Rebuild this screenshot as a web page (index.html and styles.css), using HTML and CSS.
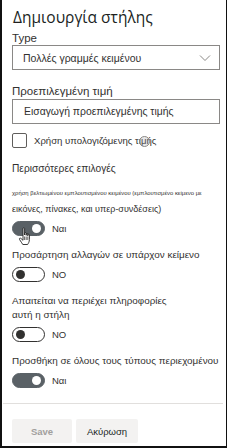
FILE: index.html
```html
<!DOCTYPE html>
<html>
  <head>
    <meta charset="utf-8" />
    <title>Δημιουργία στήλης</title>
    <link rel="stylesheet" href="styles.css">
  </head>
  <body>
    <div class="panel">
      <h1 class="title">Δημιουργία στήλης</h1>

      <label class="field-label">Type</label>
      <div class="dropdown">
        <span>Πολλές γραμμές κειμένου</span>
        <svg class="chevron" width="12" height="8" viewBox="0 0 12 8">
          <path d="M1 1.5 L6 6.5 L11 1.5" fill="none" stroke="#8a8886" stroke-width="1"/>
        </svg>
      </div>

      <label class="field-label spaced">Προεπιλεγμένη τιμή</label>
      <div class="text-input">Εισαγωγή προεπιλεγμένης τιμής</div>

      <div class="checkbox-row">
        <span class="checkbox"></span>
        <span>Χρήση υπολογιζόμενης τιμής</span>
        <span class="click-ring"></span>
      </div>

      <div class="section-title">Περισσότερες επιλογές</div>
      <div class="fine-print">χρήση βελτιωμένου εμπλουτισμένου κειμένου (εμπλουτισμένο κείμενο με</div>
      <div class="option-text first">εικόνες, πίνακες, και υπερ-συνδέσεις)</div>
      <div class="toggle-row">
        <span class="toggle on"><span class="knob"></span></span>
        <span>Ναι</span>
        <svg class="hand" width="16" height="20" viewBox="0 0 16 20">
          <path d="M5 1.5 C5 0.7 6.6 0.7 6.6 1.5 L6.6 8 L6.6 6.3 C6.6 5.5 8.2 5.5 8.2 6.3 L8.2 8.3 L8.2 7 C8.2 6.2 9.8 6.2 9.8 7 L9.8 8.8 L9.8 7.8 C9.8 7 11.4 7 11.4 7.8 L11.4 12.5 C11.4 15 10.2 16.5 9.6 17.5 L4.8 17.5 C4 16.2 2.8 14.5 1.6 12.6 C0.9 11.6 2 10.6 2.9 11.4 L5 13.3 Z" fill="#fff" stroke="#222" stroke-width="0.9" stroke-linejoin="round"/>
          <path d="M6.6 9.5 L6.6 13 M8.2 9.5 L8.2 13 M9.8 9.5 L9.8 13" stroke="#222" stroke-width="0.7"/>
        </svg>
      </div>

      <div class="option-text">Προσάρτηση αλλαγών σε υπάρχον κείμενο</div>
      <div class="toggle-row">
        <span class="toggle"><span class="knob"></span></span>
        <span>NO</span>
      </div>

      <div class="option-text">Απαιτείται να περιέχει πληροφορίες<br>αυτή η στήλη</div>
      <div class="toggle-row">
        <span class="toggle"><span class="knob"></span></span>
        <span>NO</span>
      </div>

      <div class="option-text">Προσθήκη σε όλους τους τύπους περιεχομένου</div>
      <div class="toggle-row">
        <span class="toggle on"><span class="knob"></span></span>
        <span>Ναι</span>
      </div>

      <div class="footer">
        <button class="btn disabled">Save</button>
        <button class="btn">Ακύρωση</button>
      </div>
    </div>
  </body>
</html>
```

FILE: styles.css
```css
body {
  margin: 0;
  font-family: "Liberation Sans", Arial, sans-serif;
  color: #323130;
  background: #fff;
}

.panel {
  box-sizing: border-box;
  width: 227px;
  height: 448px;
  border-left: 2px solid #111;
  border-right: 1px solid #111;
  border-bottom: 2px solid #111;
  padding: 0 6px 0 10px;
  overflow: hidden;
}

.title {
  margin: 6px 0 0 1px;
  font-family: "Open Sans", "Noto Sans", sans-serif;
  font-size: 15.5px;
  font-weight: 400;
  line-height: 22px;
  color: #201f1e;
}

.field-label {
  display: block;
  margin-top: 4px;
  font-size: 11.5px;
  line-height: 12px;
}

.field-label.spaced {
  margin-top: 15px;
}

.dropdown {
  display: flex;
  align-items: center;
  justify-content: space-between;
  height: 23px;
  margin-top: 1px;
  padding: 0 8px 0 10px;
  border: 1px solid #8a8886;
  font-size: 10.5px;
}

.dropdown .chevron {
  margin-top: 1px;
}

.text-input {
  height: 23px;
  margin-top: 2px;
  padding-left: 11px;
  border: 1px solid #8a8886;
  font-size: 10.4px;
  line-height: 23px;
}

.checkbox-row {
  position: relative;
  display: flex;
  align-items: center;
  gap: 7px;
  margin-top: 9px;
  font-size: 9.6px;
}

.checkbox {
  width: 13px;
  height: 13px;
  border: 1px solid #605e5c;
  border-radius: 2px;
}

.click-ring {
  position: absolute;
  left: 127px;
  top: 3px;
  width: 9px;
  height: 9px;
  border: 1px solid #8a8886;
  border-radius: 50%;
  background: rgba(160, 160, 160, 0.25);
}

.section-title {
  margin-top: 14px;
  font-size: 10.2px;
  line-height: 14px;
}

.fine-print {
  margin-top: 13px;
  font-size: 5.9px;
  line-height: 8px;
  white-space: nowrap;
}

.option-text {
  margin-top: 12px;
  font-size: 9.9px;
  line-height: 14px;
  white-space: nowrap;
}

.option-text.first {
  margin-top: 5px;
  font-size: 9px;
}

.toggle-row {
  position: relative;
  display: flex;
  align-items: center;
  gap: 7px;
  margin-top: 5px;
  font-size: 9.5px;
}

.toggle {
  box-sizing: border-box;
  display: flex;
  align-items: center;
  width: 33px;
  height: 15px;
  padding: 0 3px;
  border: 1px solid #323130;
  border-radius: 8px;
  background: #fff;
}

.toggle .knob {
  width: 9px;
  height: 9px;
  border-radius: 50%;
  background: #323130;
}

.toggle.on {
  justify-content: flex-end;
  border-color: #5a6166;
  background: #5a6166;
}

.toggle.on .knob {
  background: #fff;
}

.hand {
  position: absolute;
  left: 6px;
  top: 6px;
}

.footer {
  display: flex;
  gap: 4px;
  margin: 15px -3px 0 -9px;
  padding: 15px 0 0 9px;
  border-top: 1px solid #e1dfdd;
}

.btn {
  width: 62px;
  height: 24px;
  border: none;
  border-radius: 2px;
  background: #f3f2f1;
  font-family: inherit;
  font-size: 9.5px;
  color: #201f1e;
}

.btn.disabled {
  width: 60px;
  color: #a19f9d;
  font-weight: 700;
}
```
